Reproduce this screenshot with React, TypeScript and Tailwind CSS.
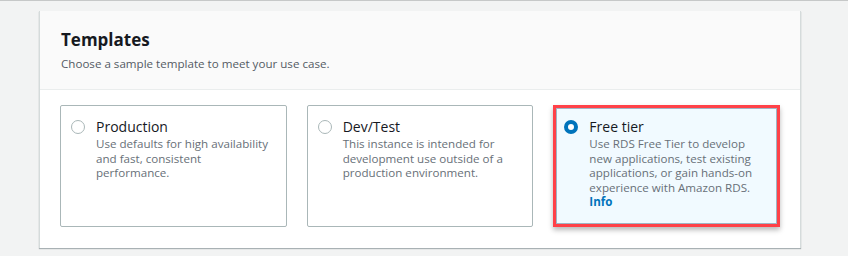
// Templates picker (RDS create-database step). Static recreation.

type Template = {
  id: string;
  title: string;
  description: string;
  info?: boolean;
};

const templates: Template[] = [
  {
    id: "production",
    title: "Production",
    description: "Use defaults for high availability and fast, consistent performance.",
  },
  {
    id: "devtest",
    title: "Dev/Test",
    description: "This instance is intended for development use outside of a production environment.",
  },
  {
    id: "free",
    title: "Free tier",
    description:
      "Use RDS Free Tier to develop new applications, test existing applications, or gain hands-on experience with Amazon RDS.",
    info: true,
  },
];

function Radio({ checked }: { checked: boolean }) {
  return checked ? (
    <span className="mt-[3px] block h-[14px] w-[14px] shrink-0 rounded-full border-[4px] border-[#0073bb] bg-white" />
  ) : (
    <span className="mt-[3px] block h-[14px] w-[14px] shrink-0 rounded-full border-[1.5px] border-[#aab7b8] bg-white" />
  );
}

function Tile({ t, selected }: { t: Template; selected: boolean }) {
  return (
    <div
      className={
        selected
          ? "flex h-[122px] gap-[11px] border-[3px] border-[#ff4148] bg-[#f1faff] pl-[8px] pr-[11px] pt-[9px] shadow-[inset_0_0_0_1px_#9fb4c4,0_3px_5px_rgba(0,0,0,0.28)]"
          : "flex h-[122px] gap-[11px] rounded-[2px] border border-[#aab7b8] bg-white pl-[10px] pr-[14px] pt-[11px]"
      }
    >
      <Radio checked={selected} />
      <div className="min-w-0">
        <p className="text-[14px] leading-[20px] text-[#16191f]">{t.title}</p>
        <p className="text-[11.6px] leading-[14.5px] text-[#687078]">{t.description}</p>
        {t.info && (
          <a className="block text-[11.6px] font-bold leading-[14.5px] text-[#0073bb]">Info</a>
        )}
      </div>
    </div>
  );
}

export default function App() {
  const selected = "free";

  return (
    <div
      className="h-[256px] w-[848px] overflow-hidden border-t border-[#c6c8c8] bg-[#f2f3f3] pt-[10px]"
      style={{ fontFamily: '"Open Sans", "Noto Sans", sans-serif' }}
    >
      <section className="ml-[39px] w-[762px] border-x border-[#d5dbdb] bg-white shadow-[0_1px_1px_0_rgba(0,28,36,0.3)]">
        {/* Header */}
        <header className="h-[79px] border-b border-[#eaeded] bg-[#fafafa] px-[21px] pt-[17px]">
          <h2 className="text-[17px] font-bold leading-[24px] text-[#16191f]">Templates</h2>
          <p className="mt-[4px] text-[11.6px] leading-[16px] text-[#545b64]">
            Choose a sample template to meet your use case.
          </p>
        </header>

        {/* Tiles */}
        <div className="grid grid-cols-3 gap-5 px-5 pb-[21px] pt-[15px]">
          {templates.map((t) => (
            <Tile key={t.id} t={t} selected={t.id === selected} />
          ))}
        </div>
      </section>
    </div>
  );
}
